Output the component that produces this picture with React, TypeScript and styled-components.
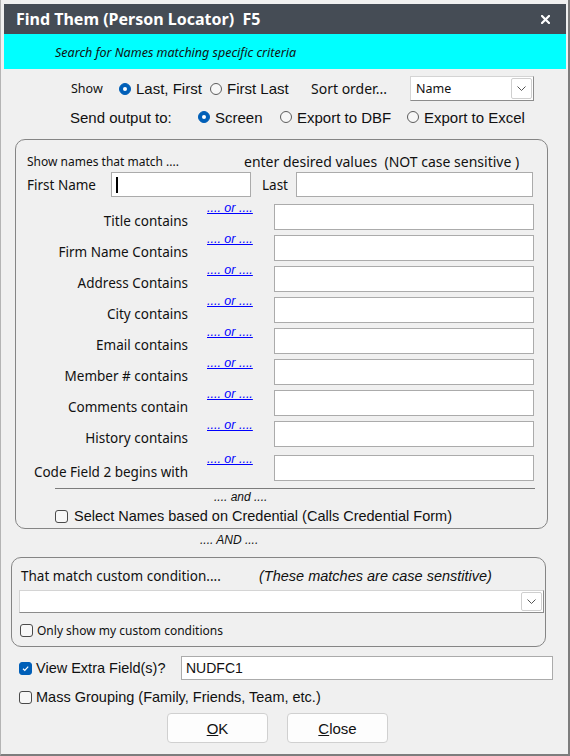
import React, { useState } from 'react';
import styled, { createGlobalStyle } from 'styled-components';

const ui = `"Noto Sans", "Segoe UI", sans-serif`;
const arial = `"Liberation Sans", Arial, sans-serif`;

const GlobalStyle = createGlobalStyle`
  html, body {
    margin: 0;
    padding: 0;
    background: #f0f0f0;
  }
  body {
    font-family: ${arial};
    color: #000;
  }
  * {
    box-sizing: border-box;
  }
`;

const Frame = styled.div`
  width: 570px;
  height: 756px;
  padding: 4px 2px 1px 3px;
  border-left: 1px solid #b4b4b4;
  border-right: 2px solid #7d7d7d;
  border-bottom: 2px solid #7d7d7d;
  background: #f0f0f0;
  display: flex;
  flex-direction: column;
`;

const TitleBar = styled.div`
  height: 30px;
  background: #454c55;
  color: #fff;
  display: flex;
  align-items: center;
  justify-content: space-between;
  padding: 0 16px 0 12px;
  font-family: ${ui};
  font-weight: 700;
  font-size: 16px;
  white-space: pre;
`;

const Banner = styled.div`
  height: 35px;
  background: #00ffff;
  display: flex;
  align-items: center;
  padding: 2px 0 0 51px;
  font-family: ${ui};
  font-style: italic;
  font-size: 12.5px;
  color: #111;
`;

const OptionRow = styled.div<{ $top: number; $pad: number; $h: number }>`
  display: flex;
  align-items: center;
  height: ${(p) => p.$h}px;
  margin-top: ${(p) => p.$top}px;
  padding-left: ${(p) => p.$pad}px;
`;

const Cell = styled.div<{ $w?: number; $ui?: boolean; $size?: number; $italic?: boolean; $indent?: number }>`
  flex: 0 0 ${(p) => (p.$w ? `${p.$w}px` : 'auto')};
  padding-left: ${(p) => p.$indent ?? 0}px;
  font-family: ${(p) => (p.$ui ? ui : arial)};
  font-size: ${(p) => p.$size ?? 15}px;
  font-style: ${(p) => (p.$italic ? 'italic' : 'normal')};
  color: #111;
  white-space: pre;
`;

const OptionLabel = styled.label<{ $w?: number; $size?: number; $ui?: boolean; $gap?: number }>`
  flex: 0 0 ${(p) => (p.$w ? `${p.$w}px` : 'auto')};
  display: inline-flex;
  align-items: center;
  gap: ${(p) => p.$gap ?? 5}px;
  font-family: ${(p) => (p.$ui ? ui : arial)};
  font-size: ${(p) => p.$size ?? 15}px;
  color: #111;
  white-space: nowrap;
  cursor: default;
`;

const RadioDot = styled.span<{ $on: boolean }>`
  width: 12px;
  height: 12px;
  border-radius: 50%;
  flex: 0 0 12px;
  background: ${(p) => (p.$on ? '#005fb8' : '#f7f7f7')};
  border: 1px solid ${(p) => (p.$on ? '#005fb8' : '#5c5c5c')};
  display: flex;
  align-items: center;
  justify-content: center;

  &::after {
    content: '';
    width: 4px;
    height: 4px;
    border-radius: 50%;
    background: #fff;
    display: ${(p) => (p.$on ? 'block' : 'none')};
  }
`;

const CheckBox = styled.span<{ $on: boolean }>`
  width: 13px;
  height: 13px;
  flex: 0 0 13px;
  border-radius: 3px;
  background: ${(p) => (p.$on ? '#005fb8' : '#f7f7f7')};
  border: 1px solid ${(p) => (p.$on ? '#005fb8' : '#4a4a4a')};
  display: flex;
  align-items: center;
  justify-content: center;
`;

const SelectBox = styled.div<{ $w: number; $h: number }>`
  width: ${(p) => p.$w}px;
  height: ${(p) => p.$h}px;
  background: #fff;
  border: 1px solid #d4d4d4;
  border-right-color: #8c8c8c;
  border-bottom-color: #8c8c8c;
  display: flex;
  align-items: center;
  justify-content: space-between;
  padding: 0 1px 0 5px;
  font-family: ${ui};
  font-size: 12.5px;
  color: #111;
`;

const DropButton = styled.span<{ $h: number }>`
  width: 21px;
  height: ${(p) => p.$h}px;
  border: 1px solid #cfcfcf;
  border-radius: 2px;
  background: #fff;
  display: flex;
  align-items: center;
  justify-content: center;
`;

const GroupBox = styled.div<{ $top: number; $left: number; $right: number }>`
  margin: ${(p) => p.$top}px ${(p) => p.$right}px 0 ${(p) => p.$left}px;
  border: 1px solid #858585;
  border-radius: 10px;
`;

const HeaderRow = styled.div`
  display: flex;
  align-items: center;
  height: 21px;
  margin-top: 11px;
  padding-left: 11px;
`;

const NameRow = styled.div`
  display: flex;
  align-items: center;
  height: 25px;
  padding-left: 11px;
`;

const TextBox = styled.div<{ $w: number; $h: number }>`
  flex: 0 0 ${(p) => p.$w}px;
  width: ${(p) => p.$w}px;
  height: ${(p) => p.$h}px;
  background: #fff;
  border: 1px solid #ababab;
  display: flex;
  align-items: center;
  padding-left: 4px;
  font-family: ${arial};
  font-size: 14px;
  color: #111;
`;

const Caret = styled.span`
  width: 2px;
  height: 16px;
  background: #000;
`;

const CriteriaList = styled.div`
  margin-top: 7px;
`;

const CriteriaRow = styled.div<{ $extra?: number }>`
  display: grid;
  grid-template-columns: 172px 86px 260px;
  height: ${(p) => (p.$extra ? 26 : 31)}px;
  margin-top: ${(p) => p.$extra ?? 0}px;
`;

const CriteriaLabel = styled.div`
  margin-top: 9px;
  text-align: right;
  line-height: 16px;
  font-family: ${ui};
  font-size: 13.5px;
  color: #111;
  white-space: nowrap;
`;

const OrLink = styled.a`
  align-self: start;
  margin-top: -3px;
  padding-left: 19px;
  line-height: 14px;
  font-family: ${arial};
  font-style: italic;
  font-size: 12.5px;
  color: #0000ff;
  text-decoration: underline;
  cursor: pointer;
  white-space: nowrap;
`;

const Separator = styled.div`
  height: 1px;
  margin: 7px 12px 0 39px;
  background: #7c7c7c;
`;

const CenterNote = styled.div<{ $pad: number; $h: number }>`
  height: ${(p) => p.$h}px;
  padding-left: ${(p) => p.$pad}px;
  display: flex;
  align-items: center;
  font-family: ${arial};
  font-style: italic;
  font-size: 12px;
  color: #111;
`;

const ComboWide = styled(SelectBox)`
  margin: 3px 0 0 7px;
`;

const ButtonRow = styled.div`
  display: flex;
  gap: 19px;
  margin-top: 5px;
  padding-left: 163px;
`;

const DialogButton = styled.button`
  width: 101px;
  height: 30px;
  background: #fdfdfd;
  border: 1px solid #d0d0d0;
  border-radius: 4px;
  font-family: ${arial};
  font-size: 15px;
  color: #111;
  padding: 0;
  cursor: pointer;

  u {
    text-decoration: underline;
  }
`;

const Chevron = () => (
  <svg width="9" height="5" viewBox="0 0 9 5">
    <path d="M0.5 0.5 L4.5 4.5 L8.5 0.5" fill="none" stroke="#555" strokeWidth="1" />
  </svg>
);

const CloseIcon = () => (
  <svg width="9" height="9" viewBox="0 0 9 9">
    <path d="M1 1 L8 8 M8 1 L1 8" stroke="#fff" strokeWidth="2.2" strokeLinecap="square" />
  </svg>
);

const CheckMark = () => (
  <svg width="9" height="9" viewBox="0 0 9 9">
    <path d="M2 4.8 L3.8 6.5 L7.2 2.6" fill="none" stroke="#fff" strokeWidth="1.2" />
  </svg>
);

type RadioProps = {
  on: boolean;
  label: string;
  w?: number;
  onPick: () => void;
};

const Radio: React.FC<RadioProps> = ({ on, label, w, onPick }) => (
  <OptionLabel $w={w} onClick={onPick}>
    <RadioDot $on={on} />
    {label}
  </OptionLabel>
);

const criteria = [
  'Title contains',
  'Firm Name Contains',
  'Address Contains',
  'City contains',
  'Email contains',
  'Member # contains',
  'Comments contain',
  'History contains',
  'Code Field 2 begins with',
];

export default function App() {
  const [order, setOrder] = useState<'last' | 'first'>('last');
  const [output, setOutput] = useState<'screen' | 'dbf' | 'excel'>('screen');
  const [credential, setCredential] = useState(false);
  const [mineOnly, setMineOnly] = useState(false);
  const [extra, setExtra] = useState(true);
  const [mass, setMass] = useState(false);

  return (
    <>
      <GlobalStyle />
      <Frame>
        <TitleBar>
          <span>Find Them (Person Locator)  F5</span>
          <CloseIcon />
        </TitleBar>
        <Banner>Search for Names matching specific criteria</Banner>

        <OptionRow $top={7} $pad={67} $h={25}>
          <Cell $w={48} $ui $size={12.5}>Show</Cell>
          <Radio w={91} on={order === 'last'} label="Last, First" onPick={() => setOrder('last')} />
          <Radio w={101} on={order === 'first'} label="First Last" onPick={() => setOrder('first')} />
          <Cell $w={99} $ui $size={14}>Sort order...</Cell>
          <SelectBox $w={124} $h={25}>
            Name
            <DropButton $h={21}>
              <Chevron />
            </DropButton>
          </SelectBox>
        </OptionRow>

        <OptionRow $top={4} $pad={66} $h={24}>
          <Cell $w={128}>Send output to:</Cell>
          <Radio w={82} on={output === 'screen'} label="Screen" onPick={() => setOutput('screen')} />
          <Radio w={127} on={output === 'dbf'} label="Export to DBF" onPick={() => setOutput('dbf')} />
          <Radio on={output === 'excel'} label="Export to Excel" onPick={() => setOutput('excel')} />
        </OptionRow>

        <GroupBox $top={10} $left={11} $right={18}>
          <HeaderRow>
            <Cell $w={217} $ui $size={12}>Show names that match ....</Cell>
            <Cell $ui $size={14}>enter desired values  (NOT case sensitive )</Cell>
          </HeaderRow>
          <NameRow>
            <Cell $w={84} $ui $size={13.5}>First Name</Cell>
            <TextBox $w={140} $h={25}>
              <Caret />
            </TextBox>
            <Cell $w={45} $ui $size={13.5} $indent={11}>Last</Cell>
            <TextBox $w={237} $h={25} />
          </NameRow>

          <CriteriaList>
            {criteria.map((label, i) => (
              <CriteriaRow key={label} $extra={i === criteria.length - 1 ? 3 : undefined}>
                <CriteriaLabel>{label}</CriteriaLabel>
                <OrLink>.... or ....</OrLink>
                <TextBox $w={260} $h={26} />
              </CriteriaRow>
            ))}
          </CriteriaList>

          <Separator />
          <CenterNote $pad={198} $h={16}>.... and ....</CenterNote>
          <OptionRow $top={0} $pad={39} $h={22}>
            <OptionLabel $gap={6} $size={14.5} onClick={() => setCredential(!credential)}>
              <CheckBox $on={credential}>{credential && <CheckMark />}</CheckBox>
              Select Names based on Credential (Calls Credential Form)
            </OptionLabel>
          </OptionRow>
          <div style={{ height: 1 }} />
        </GroupBox>

        <CenterNote $pad={196} $h={22}>.... AND ....</CenterNote>

        <GroupBox $top={6} $left={7} $right={20}>
          <OptionRow $top={7} $pad={9} $h={22}>
            <Cell $w={238} $ui $size={13.5}>That match custom condition....</Cell>
            <Cell $italic $size={14.5}>(These matches are case senstitive)</Cell>
          </OptionRow>
          <ComboWide $w={525} $h={23}>
            <span />
            <DropButton $h={19}>
              <Chevron />
            </DropButton>
          </ComboWide>
          <OptionRow $top={9} $pad={8} $h={16}>
            <OptionLabel $ui $size={12} $gap={4} onClick={() => setMineOnly(!mineOnly)}>
              <CheckBox $on={mineOnly}>{mineOnly && <CheckMark />}</CheckBox>
              Only show my custom conditions
            </OptionLabel>
          </OptionRow>
          <div style={{ height: 8 }} />
        </GroupBox>

        <OptionRow $top={9} $pad={15} $h={24}>
          <OptionLabel $w={162} $size={14.5} $gap={4} onClick={() => setExtra(!extra)}>
            <CheckBox $on={extra}>{extra && <CheckMark />}</CheckBox>
            View Extra Field(s)?
          </OptionLabel>
          <TextBox $w={372} $h={24}>NUDFC1</TextBox>
        </OptionRow>

        <OptionRow $top={6} $pad={15} $h={22}>
          <OptionLabel $size={14.5} $gap={4} onClick={() => setMass(!mass)}>
            <CheckBox $on={mass}>{mass && <CheckMark />}</CheckBox>
            Mass Grouping (Family, Friends, Team, etc.)
          </OptionLabel>
        </OptionRow>

        <ButtonRow>
          <DialogButton>
            <u>O</u>K
          </DialogButton>
          <DialogButton>
            <u>C</u>lose
          </DialogButton>
        </ButtonRow>
      </Frame>
    </>
  );
}
